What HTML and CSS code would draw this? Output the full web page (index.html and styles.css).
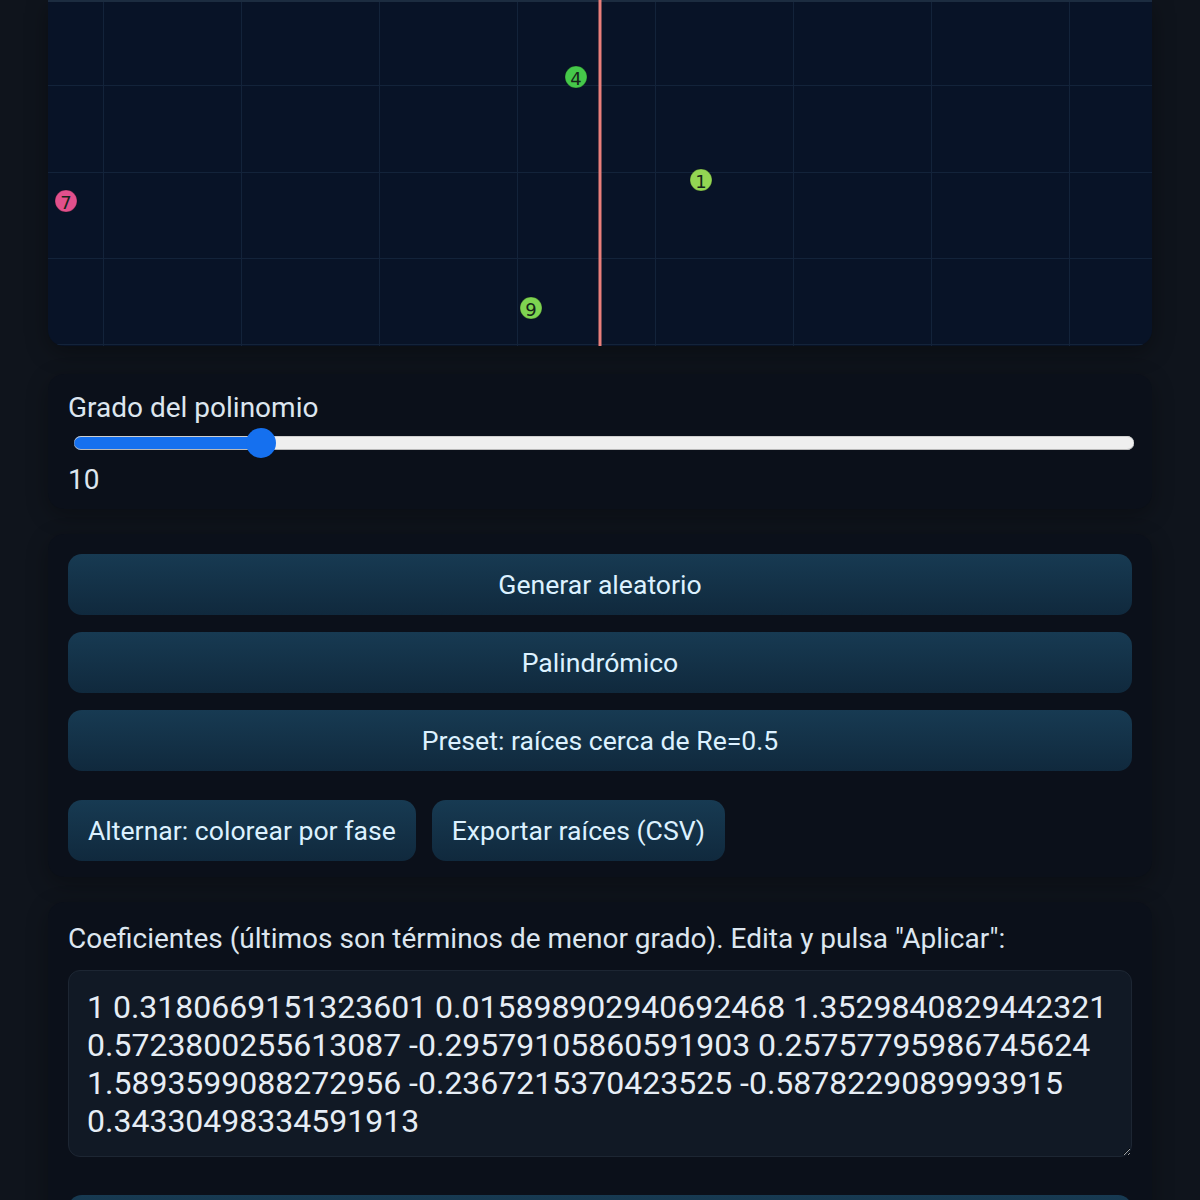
FILE: index.html
```html
<!DOCTYPE html>
<html lang="es">
<head>
  <meta charset="UTF-8" />
  <meta name="viewport" content="width=device-width, initial-scale=1.0"/>
  <title>Raíces de polinomios</title>
  <link rel="stylesheet" href="styles.css">
</head>
<body>

  <div class="app">

    <div class="plot-card">
      <svg class="plot" viewBox="0 0 1104 346" width="1104" height="346">
        <g class="grid">
          <line x1="55.5" y1="0" x2="55.5" y2="346" />
          <line x1="193.5" y1="0" x2="193.5" y2="346" />
          <line x1="331.5" y1="0" x2="331.5" y2="346" />
          <line x1="469.5" y1="0" x2="469.5" y2="346" />
          <line x1="607.5" y1="0" x2="607.5" y2="346" />
          <line x1="745.5" y1="0" x2="745.5" y2="346" />
          <line x1="883.5" y1="0" x2="883.5" y2="346" />
          <line x1="1021.5" y1="0" x2="1021.5" y2="346" />
          <line x1="0" y1="1" x2="1104" y2="1" class="edge" />
          <line x1="0" y1="85.5" x2="1104" y2="85.5" />
          <line x1="0" y1="172.5" x2="1104" y2="172.5" />
          <line x1="0" y1="258.5" x2="1104" y2="258.5" />
          <line x1="0" y1="344.5" x2="1104" y2="344.5" />
        </g>
        <rect class="axis-re" x="550.5" y="0" width="3" height="346" />

        <g class="root">
          <circle cx="528" cy="77" r="11" fill="#45c84a" />
          <text x="528" y="78">4</text>
        </g>
        <g class="root">
          <circle cx="653" cy="180" r="11" fill="#93d653" />
          <text x="653" y="181">1</text>
        </g>
        <g class="root">
          <circle cx="483" cy="308" r="11" fill="#7ed451" />
          <text x="483" y="309">9</text>
        </g>
        <g class="root">
          <circle cx="18" cy="201" r="11" fill="#e2508c" />
          <text x="18" y="202">7</text>
        </g>
      </svg>
    </div>

    <div class="card degree-card">
      <label for="degree">Grado del polinomio</label>
      <input type="range" id="degree" min="2" max="50" value="10" style="--pct: 17.5%">
      <div class="degree-value">10</div>
    </div>

    <div class="card actions">
      <button class="btn">Generar aleatorio</button>
      <button class="btn">Palindrómico</button>
      <button class="btn">Preset: raíces cerca de Re=0.5</button>
      <div class="btn-row">
        <button class="btn btn-inline">Alternar: colorear por fase</button>
        <button class="btn btn-inline">Exportar raíces (CSV)</button>
      </div>
    </div>

    <div class="card coeffs">
      <label for="coefs">Coeficientes (últimos son términos de menor grado). Edita y pulsa "Aplicar":</label>
      <textarea id="coefs" spellcheck="false">1 0.3180669151323601 0.015898902940692468 1.3529840829442321 0.5723800255613087 -0.29579105860591903 0.25757795986745624 1.5893599088272956 -0.2367215370423525 -0.5878229089993915 0.34330498334591913</textarea>
      <button class="btn">Aplicar</button>
    </div>

  </div>

</body>
</html>
```

FILE: styles.css
```css
body {
  font-family: Roboto, "Noto Sans", sans-serif;
  background-color: #0f141c;
  color: #dde6ef;
  margin: 0;
  padding: 0;
}

.app {
  max-width: 1104px;
  margin: 0 auto;
  display: flex;
  flex-direction: column;
  gap: 25px;
}

.plot-card {
  height: 346px;
  margin-bottom: 3px;
  background-color: #081327;
  border-radius: 0 0 16px 16px;
  overflow: hidden;
  box-shadow: 0 6px 22px rgba(0, 0, 0, 0.35);
}

.plot {
  display: block;
}

.grid line {
  stroke: #13233a;
  stroke-width: 1;
}

.grid line.edge {
  stroke: #1c2c40;
  stroke-width: 2;
}

.axis-re {
  fill: #e97f7b;
}

.root circle {
  stroke: rgba(0, 0, 0, 0.25);
  stroke-width: 1;
}

.root text {
  font-family: "DejaVu Sans", sans-serif;
  font-size: 18px;
  fill: #15241a;
  text-anchor: middle;
  dominant-baseline: central;
}

.card {
  background-color: #0b101a;
  border-radius: 16px;
  box-shadow: 0 6px 22px rgba(0, 0, 0, 0.3);
}

.degree-card {
  padding: 19px 20px 14px;
  display: flex;
  flex-direction: column;
}

.degree-card label,
.coeffs label {
  font-size: 28px;
  line-height: 30px;
  color: #dde6ef;
}

.degree-value {
  font-size: 28px;
  line-height: 30px;
  margin-top: 7px;
}

input[type="range"] {
  -webkit-appearance: none;
  appearance: none;
  width: calc(100% - 4px);
  height: 30px;
  margin: 5px 0 0 6px;
  background: transparent;
}

input[type="range"]::-webkit-slider-runnable-track {
  height: 14px;
  border-radius: 7px;
  background: linear-gradient(to right, #1570ef var(--pct), #efefef var(--pct));
  box-shadow: inset 0 -1px 0 #b9b9b9, inset 0 1px 0 #cfcfcf;
}

input[type="range"]::-webkit-slider-thumb {
  -webkit-appearance: none;
  width: 30px;
  height: 30px;
  margin-top: -8px;
  border-radius: 50%;
  background-color: #1570ef;
  border: none;
}

.actions {
  padding: 20px 20px 16px;
  display: flex;
  flex-direction: column;
  gap: 17px;
}

.btn {
  font-family: Roboto, "Noto Sans", sans-serif;
  font-size: 26.6px;
  color: #dcf1ff;
  height: 61px;
  padding: 0 20px;
  border: none;
  border-radius: 14px;
  background: linear-gradient(#173a52, #10293d);
  cursor: pointer;
}

.btn-row {
  display: flex;
  gap: 16px;
  margin-top: 12px;
}

.coeffs {
  padding: 22px 20px 20px;
  display: flex;
  flex-direction: column;
}

.coeffs textarea {
  box-sizing: border-box;
  width: 100%;
  height: 187px;
  margin-top: 16px;
  padding: 17px 18px 16px;
  font-family: Roboto, "Noto Sans", sans-serif;
  font-size: 32px;
  line-height: 38px;
  color: #e6edf5;
  background-color: #111925;
  border: 1px solid #1d2633;
  border-radius: 12px;
  resize: vertical;
  outline: none;
}

.coeffs .btn {
  margin-top: 38px;
}
```
